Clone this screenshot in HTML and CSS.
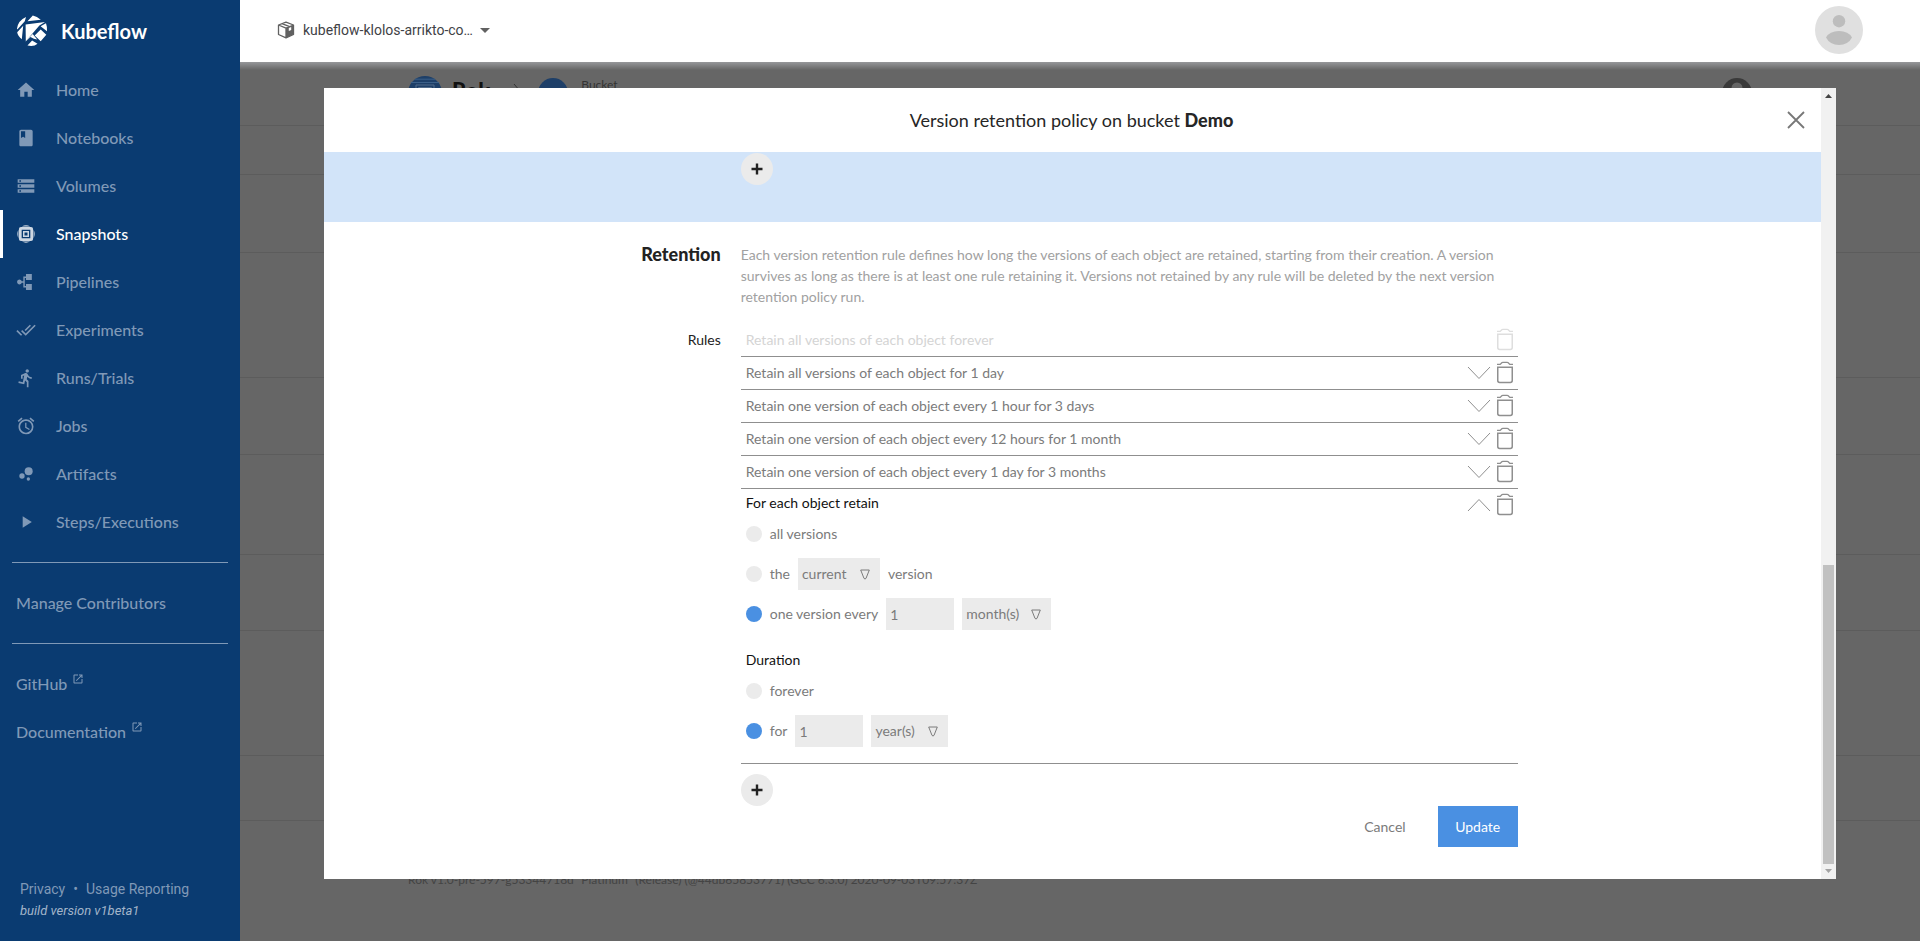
FILE: index.html
```
<!DOCTYPE html>
<html lang="en">
<head>
<meta charset="utf-8">
<title>Kubeflow – Snapshots</title>
<link rel="stylesheet" href="styles.css">
</head>
<body>
<svg class="defs" aria-hidden="true">
  <symbol id="trash" viewBox="0 0 18 24"><g fill="none" stroke="currentColor"><path stroke-width="1.5" d="M1.75 6.2h14.5v13.4q0 1.9-1.9 1.9H3.65q-1.9 0-1.9-1.9z"/><path stroke-width="1.3" d="M1 3.4h3.2l1.6-1.7q.4-.4 1-.4h4.4q.6 0 1 .4l1.600 1.7H17"/></g></symbol>
  <symbol id="down" viewBox="0 0 24 14"><path d="M1 1l11 11.500L23 1" fill="none" stroke="currentColor"/></symbol>
  <symbol id="up" viewBox="0 0 24 14"><path d="M1 13L12 1.500L23 13" fill="none" stroke="currentColor"/></symbol>
  <symbol id="plus" viewBox="0 0 12 12"><path d="M6 .5v11M.5 6h11" stroke="currentColor" stroke-width="2.400"/></symbol>
  <symbol id="launch" viewBox="0 0 24 24"><path fill="currentColor" d="M19 19H5V5h7V3H5c-1.110 0-2 .9-2 2v14c0 1.100.89 2 2 2h14c1.100 0 2-.9 2-2v-7h-2v7zM14 3v2h3.590l-9.830 9.830 1.410 1.410L19 6.410V10h2V3h-7z"/></symbol>
</svg>
<div class="app">
  <aside class="sidebar">
    <a class="brand" href="#">
      <svg class="logo" viewBox="0 0 32 32" fill="#fff"><path d="M11.500 6.300L16.800.6q4.200.7 8 4.200zM1 13.500Q2 5.500 10 1.900L8.800 6.200 1.300 14.500zM1.200 17.200L7.200 10.800 5.800 24.300Q1.600 20.500 1.200 17.200zM9.600 9.600L29 7l-5.600 3.600L9.800 26.300zM24.600 11.300L30 8.300q1.300 3.500 1 8zM18.700 20.600l6-6.200 5.600 5.300-5.600 6.500zM11.500 30.500l4.600-5 5.400 3.200q-3.500 3.200-10 1.800zM8.800 27.300l7.900-8.300 4.500 5.500-3.300-.8-3.400-1.700z"/></svg>
      <span>Kubeflow</span>
    </a>
    <nav class="nav">
      <a href="#"><svg viewBox="0 0 24 24"><path d="M10 20v-6h4v6h5v-8h3L12 3 2 12h3v8z"/></svg>Home</a>
      <a href="#"><svg viewBox="0 0 24 24"><path d="M18 2H6c-1.100 0-2 .9-2 2v16c0 1.100.9 2 2 2h12c1.100 0 2-.9 2-2V4c0-1.100-.9-2-2-2zM6 4h5v8l-2.500-1.500L6 12V4z"/></svg>Notebooks</a>
      <a href="#"><svg viewBox="0 0 24 24"><path d="M2 20h20v-4H2v4zm2-3h2v2H4v-2zM2 4v4h20V4H2zm4 3H4V5h2v2zm-4 7h20v-4H2v4zm2-3h2v2H4v-2z"/></svg>Volumes</a>
      <a href="#" class="active"><svg viewBox="0 0 24 24"><path fill-rule="evenodd" d="M6 3.500h12a2.500 2.500 0 0 1 2.500 2.500v12a2.500 2.500 0 0 1-2.500 2.500H6A2.500 2.500 0 0 1 3.500 18V6A2.500 2.500 0 0 1 6 3.500zM6.800 6.800v10.400h10.400V6.800zM8.400 8.400h7.200v7.200H8.400zm1.800 1.800v3.600h3.600v-3.600z"/><path d="M7 2.900Q12 .3 17 2.900zM7 21.100q5 2.600 10 0zM2.900 7Q.3 12 2.900 17zM21.100 7q2.600 5 0 10z"/></svg>Snapshots</a>
      <a href="#"><svg viewBox="0 0 24 24"><path d="M12 2.500h7v7h-7V7.200h-1.500v9.600H12v-2.300h7v7h-7v-2.800H8.800V13H6.900a2.900 2.900 0 1 1 0-2h1.900V5.300H12z"/></svg>Pipelines</a>
      <a href="#"><svg viewBox="0 0 24 24"><path d="M18 7l-1.410-1.410-6.340 6.340 1.410 1.410L18 7zm4.240-1.410L11.660 16.170 7.480 12l-1.410 1.410L11.660 19l12-12-1.420-1.410zM.41 13.410L6 19l1.410-1.410L1.830 12 .41 13.410z"/></svg>Experiments</a>
      <a href="#"><svg viewBox="0 0 24 24"><path d="M13.490 5.480c1.100 0 2-.9 2-2s-.9-2-2-2-2 .9-2 2 .9 2 2 2zm-3.600 13.900l1-4.400 2.100 2v6h2v-7.500l-2.100-2 .6-3c1.300 1.500 3.300 2.500 5.500 2.500v-2c-1.900 0-3.500-1-4.300-2.400l-1-1.600c-.4-.6-1-1-1.700-1-.3 0-.5.1-.8.1l-5.200 2.200v4.700h2v-3.400l1.800-.7-1.600 8.100-4.900-1-.4 2 7 1.400z"/></svg>Runs/Trials</a>
      <a href="#"><svg viewBox="0 0 24 24"><path d="M22 5.720l-4.600-3.860-1.290 1.530 4.600 3.860L22 5.720zM7.880 3.390L6.600 1.860 2 5.710l1.290 1.530 4.590-3.850zM12.500 8H11v6l4.750 2.850.75-1.230-4-2.370V8zM12 4c-4.970 0-9 4.030-9 9s4.020 9 9 9a9 9 0 0 0 0-18zm0 16c-3.870 0-7-3.130-7-7s3.130-7 7-7 7 3.130 7 7-3.130 7-7 7z"/></svg>Jobs</a>
      <a href="#"><svg viewBox="0 0 24 24"><circle cx="7.200" cy="14.400" r="3.200"/><circle cx="14.800" cy="18" r="2"/><circle cx="15.200" cy="8.800" r="4.800"/></svg>Artifacts</a>
      <a href="#"><svg viewBox="0 0 24 24"><path d="M8 5v14l11-7z"/></svg>Steps/Executions</a>
      <hr>
      <a href="#" class="plain">Manage Contributors</a>
      <hr>
      <a href="#" class="plain">GitHub <svg class="ext"><use href="#launch"/></svg></a>
      <a href="#" class="plain">Documentation <svg class="ext"><use href="#launch"/></svg></a>
    </nav>
    <footer class="legal">
      <div><a href="#">Privacy</a><span class="dot">•</span><a href="#">Usage Reporting</a></div>
      <div class="build">build version v1beta1</div>
    </footer>
  </aside>

  <div class="main">
    <header class="topbar">
      <button class="namespace" type="button">
        <svg class="cube" viewBox="0 0 18 18"><path fill="none" stroke="#616161" stroke-width="1.300" stroke-linejoin="round" d="M9 1.200L16.500 4v9.500L9 16.800 1.500 13.500V4zM1.500 4L9 7.200 16.500 4M9 7.200v9.600M5 2.700l7.600 3"/><path fill="#616161" d="M9 7.200L16.500 4v9.500L9 16.800z"/><path fill="#fff" d="M11.800 7l2.400-1v3l-2.400 1z"/></svg>
        <span>kubeflow-klolos-arrikto-co…</span>
        <svg class="caret" viewBox="0 0 10 5"><path fill="#616161" d="M0 0h10L5 5z"/></svg>
      </button>
      <svg class="avatar" viewBox="0 0 48 48"><circle cx="24" cy="24" r="24" fill="#e0e0e0"/><circle cx="24" cy="15.200" r="6.200" fill="#bdbdbd"/><path fill="#bdbdbd" d="M11 31.500Q14.500 25 24 25t13 6.500Q33 39 24 39t-13-7.500z"/></svg>
    </header>

    <div class="stage">
      <div class="backdrop-page">
        <div class="crumbs">
          <svg class="rok" viewBox="0 0 34 34"><circle cx="17" cy="17" r="17" fill="#1e3f68"/><path d="M7 3.200h20M3 6.500h28" stroke="#3c6089" fill="none"/><path d="M8 9h18v13H8zM10.500 11.500h13v8h-13z" stroke="#536c8a" fill="none"/></svg>
          <span class="rok-name">Rok</span>
          <svg class="crumb-sep" viewBox="0 0 8 16"><path d="M1 1l6 7-6 7" fill="none" stroke="#333"/></svg>
          <span class="bucket-dot"></span>
          <span class="bucket-label">Bucket</span>
          <svg class="user" viewBox="0 0 30 30"><circle cx="15" cy="15" r="15" fill="#3a3a3a"/><circle cx="15" cy="10" r="5.500" fill="#666"/><path d="M5 24q10-11 20 0z" fill="#666"/></svg>
        </div>
        <div class="band band-s"></div><div class="band band-l"></div><div class="band band-xl"></div><div class="band band-m"></div><div class="band band-x"></div><div class="band band-m2"></div><div class="band band-xl"></div><div class="band band-s2"></div>
        <div class="version">Rok v1.0-pre-597-g53344718d "Platinum" (Release) (@44db65853771) (GCC 6.3.0) 2020-09-03T09:57:37Z</div>
      </div>

      <div class="overlay">
        <section class="modal" role="dialog" aria-labelledby="title">
          <div class="sheet">
            <header class="modal-head">
              <h1 id="title">Version retention policy on bucket <b>Demo</b></h1>
              <button class="close" type="button" aria-label="Close"><svg viewBox="0 0 18 18"><path d="M1 1l16 16M17 1L1 17" stroke="currentColor" stroke-width="1.800"/></svg></button>
            </header>
            <div class="grid selected">
              <div class="field"><button class="add" type="button" aria-label="Add"><svg><use href="#plus"/></svg></button></div>
            </div>
            <form class="form">
              <div class="grid intro">
                <h2>Retention</h2>
                <p>Each version retention rule defines how long the versions of each object are retained, starting from their creation. A version survives as long as there is at least one rule retaining it. Versions not retained by any rule will be deleted by the next version retention policy run.</p>
              </div>
              <div class="grid">
                <div class="label">Rules</div>
                <div class="field">
                  <ul class="rules">
                    <li class="rule disabled"><span>Retain all versions of each object forever</span><button type="button" aria-label="Delete" disabled><svg class="trash"><use href="#trash"/></svg></button></li>
                    <li class="rule"><span>Retain all versions of each object for 1 day</span><button type="button" aria-label="Expand"><svg class="chev"><use href="#down"/></svg></button><button type="button" aria-label="Delete"><svg class="trash"><use href="#trash"/></svg></button></li>
                    <li class="rule"><span>Retain one version of each object every 1 hour for 3 days</span><button type="button" aria-label="Expand"><svg class="chev"><use href="#down"/></svg></button><button type="button" aria-label="Delete"><svg class="trash"><use href="#trash"/></svg></button></li>
                    <li class="rule"><span>Retain one version of each object every 12 hours for 1 month</span><button type="button" aria-label="Expand"><svg class="chev"><use href="#down"/></svg></button><button type="button" aria-label="Delete"><svg class="trash"><use href="#trash"/></svg></button></li>
                    <li class="rule"><span>Retain one version of each object every 1 day for 3 months</span><button type="button" aria-label="Expand"><svg class="chev"><use href="#down"/></svg></button><button type="button" aria-label="Delete"><svg class="trash"><use href="#trash"/></svg></button></li>
                    <li class="editor">
                      <div class="rule open"><h3>For each object retain</h3><button type="button" aria-label="Collapse"><svg class="chev"><use href="#up"/></svg></button><button type="button" aria-label="Delete"><svg class="trash"><use href="#trash"/></svg></button></div>
                      <div class="option"><input type="radio" name="keep" id="k1"><label for="k1">all versions</label></div>
                      <div class="option"><input type="radio" name="keep" id="k2"><label for="k2">the</label><span class="pick"><select class="w-current" aria-label="Which version"><option>current</option></select><svg viewBox="0 0 10 11"><path d="M.7 1h8.600L6 9.400q-1 1.200-2 0z"/></svg></span><span>version</span></div>
                      <div class="option"><input type="radio" name="keep" id="k3" checked><label for="k3">one version every</label><input type="text" value="1" aria-label="Interval"><span class="pick"><select class="w-month" aria-label="Interval unit"><option>month(s)</option></select><svg viewBox="0 0 10 11"><path d="M.7 1h8.600L6 9.400q-1 1.200-2 0z"/></svg></span></div>
                      <h3 class="duration">Duration</h3>
                      <div class="option"><input type="radio" name="dur" id="d1"><label for="d1">forever</label></div>
                      <div class="option"><input type="radio" name="dur" id="d2" checked><label for="d2">for</label><input type="text" value="1" aria-label="Duration"><span class="pick"><select class="w-year" aria-label="Duration unit"><option>year(s)</option></select><svg viewBox="0 0 10 11"><path d="M.7 1h8.600L6 9.400q-1 1.200-2 0z"/></svg></span></div>
                    </li>
                  </ul>
                  <button class="add" type="button" aria-label="Add rule"><svg><use href="#plus"/></svg></button>
                  <div class="actions"><button type="button" class="cancel">Cancel</button><button type="submit" class="update">Update</button></div>
                </div>
              </div>
            </form>
          </div>
          <div class="scrollbar" aria-hidden="true">
            <svg viewBox="0 0 15 17"><path fill="#444" d="M4 10l3.500-4L11 10z"/></svg>
            <div class="track"><div class="thumb"></div></div>
            <svg viewBox="0 0 15 15"><path fill="#a3a3a3" d="M4 5h7L7.500 9z"/></svg>
          </div>
        </section>
      </div>
    </div>
  </div>
</div>
</body>
</html>
```
FILE: styles.css
```
* { box-sizing: border-box; }
body { margin: 0; font: 14px/20px Lato, "Liberation Sans", sans-serif; color: #7b7b7b; }
a { color: inherit; text-decoration: none; }
button { border: 0; padding: 0; background: none; font: inherit; color: inherit; cursor: pointer; }
h1, h2, h3, p, ul { margin: 0; padding: 0; font: inherit; list-style: none; }
svg { display: block; flex: none; }
.defs { position: absolute; width: 0; height: 0; }

.app { display: flex; height: 100vh; overflow: hidden; }

/* Sidebar */
.sidebar { width: 240px; flex: none; background: #0a3b71; color: #8099b7; display: flex; flex-direction: column; }
.brand { height: 61px; padding-left: 16px; display: flex; align-items: center; gap: 13px; color: #fff; font-size: 20px; font-weight: 700; }
.logo { width: 32px; height: 32px; }
.nav { padding-top: 5px; }
.nav a { height: 48px; display: flex; align-items: center; gap: 20px; padding-left: 16px; font-size: 16px; font-weight: 500; border-left: 0 solid #fff; }
.nav a > svg { width: 20px; height: 20px; fill: currentColor; }
.nav a.active { color: #fff; border-left-width: 3px; padding-left: 13px; }
.nav a.active svg { opacity: .8; }
.nav a.plain { gap: 5px; }
.nav a > svg.ext { width: 12px; height: 12px; margin-bottom: 10px; }
.nav hr { margin: 16px 12px; border: 0; border-top: 1px solid #8099b7; }
.legal { margin-top: auto; padding: 0 20px 20px; font-family: Roboto, sans-serif; line-height: 21px; }
.dot { margin: 0 8px; }
.build { font-size: 13px; font-style: italic; color: #a3b5ca; }

/* Top bar */
.main { flex: 1; min-width: 0; display: flex; flex-direction: column; }
.topbar { height: 62px; flex: none; background: #fff; display: flex; align-items: center; justify-content: space-between; padding: 0 57px 2px 37px; }
.namespace { display: flex; align-items: center; font-family: Roboto, sans-serif; color: #3f4246; }
.cube { width: 18px; height: 18px; margin-right: 8px; }
.caret { width: 10px; height: 5px; margin-left: 7px; }
.avatar { width: 48px; height: 48px; }

/* Page behind the dialog */
.stage { flex: 1; position: relative; min-height: 0; overflow: hidden; background: #666; }
.backdrop-page { height: 100%; background: linear-gradient(#96979a, #666 8px); }
.crumbs { height: 64px; display: flex; align-items: flex-start; padding: 14px 168px 0; border-bottom: 1px solid #5c5c5c; }
.rok { width: 34px; height: 34px; }
.rok-name { margin: 2px 23px 0 10px; font-size: 22px; line-height: 26px; font-weight: 900; color: #111; }
.crumb-sep { width: 8px; height: 16px; margin-top: 7px; }
.bucket-dot { width: 30px; height: 30px; margin: 2px 13px 0 17px; border-radius: 50%; background: #1e3f68; }
.bucket-label { font-size: 12px; line-height: 18px; color: #333; }
.user { width: 30px; height: 30px; margin: 2px 0 0 auto; }
.band { border-bottom: 1px solid #5c5c5c; }
.band-s { height: 49px; }
.band-l { height: 78px; }
.band-xl { height: 125px; }
.band-m { height: 77px; }
.band-m2 { height: 76px; }
.band-x { height: 100px; }
.band-s2 { height: 65px; }
.version { margin-top: 49px; padding-left: 168px; font-size: 12px; line-height: 20px; color: #444; }

/* Dialog */
.overlay { position: absolute; inset: 0; padding: 26px 5% 62px; }
.modal { height: 100%; background: #fff; display: flex; }
.sheet { flex: 1; min-width: 0; overflow: hidden; }
.modal-head { height: 64px; display: flex; align-items: center; padding: 0 16px 0 32px; color: #262626; }
.modal-head h1 { flex: 1; text-align: center; font-size: 18px; line-height: 24px; }
.modal-head b { font-weight: 900; }
.close { color: #777; }
.close svg { width: 18px; height: 18px; }
.grid { display: grid; grid-template-columns: 26.5% 51.9%; column-gap: 20px; }
.field { grid-column: 2; }
.selected { background: #d2e4f9; height: 70px; }
.selected .add { margin: 1px 0 0; }
.add { display: grid; place-items: center; width: 32px; height: 32px; margin: 10px 0 0; border-radius: 50%; background: #ebebeb; color: #222; }
.add svg { width: 12px; height: 12px; }
.intro { padding: 22px 0 17px; line-height: 21px; color: #a1a1a1; }
.intro h2, .label { text-align: right; color: #222; }
.intro h2 { font-size: 18px; font-weight: 900; }
.label { line-height: 32px; }

.rule { height: 33px; display: flex; align-items: center; padding: 0 4px 0 5px; border-bottom: 1px solid #8f8f8f; }
.rule span, .rule h3 { flex: 1; }
.rule button { margin-left: 5px; color: #8f8f8f; }
.rule.disabled span { color: #d4d4d4; }
.rule.disabled button { color: #dedede; cursor: default; }
.chev { width: 24px; height: 14px; }
.trash { width: 18px; height: 24px; }
.editor { border-bottom: 1px solid #8f8f8f; padding-bottom: 12px; }
.open { border-bottom: 0; height: 32px; }
.open h3 { padding-bottom: 4px; }
h3 { color: #111; }
.duration { padding: 16px 5px 0; margin-bottom: 5px; line-height: 20px; }
.option { display: flex; align-items: center; gap: 8px; padding-left: 5px; height: 40px; }
.open + .option, .duration + .option { height: 32px; margin-bottom: 4px; }
.open + .option { margin-top: -3px; }
.option input[type=radio] { appearance: none; width: 16px; height: 16px; margin: 0; border-radius: 50%; background: #ebebeb; }
.option input[type=radio]:checked { background: #4a90e2; }
.option input[type=text], .option select { height: 32px; border: 0; border-radius: 0; padding: 0 4px; background: #ebebeb; font: inherit; color: #7b7b7b; }
.option input[type=text] { width: 68px; }
.option select { appearance: none; }
.w-current { width: 82px; }
.w-month { width: 89px; }
.w-year { width: 77px; }
.pick { position: relative; }
.pick svg { position: absolute; right: 10px; top: 11px; width: 10px; height: 11px; fill: none; stroke: #7b7b7b; pointer-events: none; }
.actions { display: flex; justify-content: flex-end; gap: 16px; }
.actions button { height: 41px; padding: 0 16px; }
.actions .update { min-width: 80px; background: #4a90e2; color: #fff; }

.scrollbar { width: 15px; flex: none; display: flex; flex-direction: column; background: #f1f1f1; }
.scrollbar svg { width: 15px; }
.track { flex: 1; display: flex; align-items: flex-end; padding: 0 2px; }
.thumb { width: 100%; height: 39.4%; background: #c1c1c1; }
```
